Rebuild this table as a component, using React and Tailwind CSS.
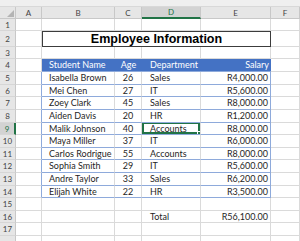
import React from 'react';

const cols = [
  { key: 'A', w: 'w-[26px]' },
  { key: 'B', w: 'w-[73px]' },
  { key: 'C', w: 'w-[27px]' },
  { key: 'D', w: 'w-[59px]' },
  { key: 'E', w: 'w-[70px]' },
  { key: 'F', w: 'w-[29px]' },
];

const employees = [
  ['Isabella Brown', '26', 'Sales', 'R4,000.00'],
  ['Mei Chen', '27', 'IT', 'R5,600.00'],
  ['Zoey Clark', '45', 'Sales', 'R8,000.00'],
  ['Aiden Davis', '20', 'HR', 'R1,200.00'],
  ['Malik Johnson', '40', 'Accounts', 'R8,000.00'],
  ['Maya Miller', '37', 'IT', 'R6,000.00'],
  ['Carlos Rodrigue', '55', 'Accounts', 'R8,000.00'],
  ['Sophia Smith', '29', 'IT', 'R5,600.00'],
  ['Andre Taylor', '33', 'Sales', 'R6,200.00'],
  ['Elijah White', '22', 'HR', 'R3,500.00'],
];

// heights for rows 5..14
const dataHeights = ['h-[13px]', 'h-[12px]', 'h-[13px]', 'h-[13px]', 'h-[12px]', 'h-[13px]', 'h-[12px]', 'h-[13px]', 'h-[13px]', 'h-[12px]'];

function RowHead({ n, active }) {
  return (
    <div
      className={`w-[16px] shrink-0 flex items-center justify-center text-[8px] border-b border-[#d6d6d6] ${
        active
          ? 'bg-[#d3d3d3] text-[#217346] border-r-2 border-r-[#217346]'
          : 'bg-[#e6e6e6] text-[#444] border-r border-r-[#c8c8c8]'
      }`}
    >
      {n}
    </div>
  );
}

function Cell({ w, className = '', children }) {
  return (
    <div className={`${w} shrink-0 flex items-center border-r border-b border-[#dadada] whitespace-nowrap overflow-hidden ${className}`}>
      {children}
    </div>
  );
}

function BlankRow({ n, h }) {
  return (
    <div className={`flex ${h}`}>
      <RowHead n={n} />
      {cols.map((c) => (
        <Cell key={c.key} w={c.w} />
      ))}
    </div>
  );
}

export default function App() {
  return (
    <div className="w-[300px] h-[241px] overflow-hidden bg-white text-[#1f1f1f] text-[9px] font-['Lato','Liberation_Sans',sans-serif]">
      <div className="h-[7px] bg-[#efefef] border-b border-[#d8d8d8]" />

      {/* column headers */}
      <div className="flex h-[12px] bg-[#e6e6e6] text-[8px] text-[#444]">
        <div className="w-[16px] shrink-0 relative border-r border-b border-[#c8c8c8]">
          <div className="absolute right-[1px] bottom-[1px] w-0 h-0 border-l-[7px] border-l-transparent border-b-[7px] border-b-[#b4b4b4]" />
        </div>
        {cols.map((c) => (
          <div
            key={c.key}
            className={`${c.w} shrink-0 flex items-center justify-center border-r border-[#c8c8c8] ${
              c.key === 'D' ? 'bg-[#d3d3d3] text-[#217346] border-b-2 border-b-[#217346]' : 'border-b'
            }`}
          >
            {c.key}
          </div>
        ))}
      </div>

      <BlankRow n={1} h="h-[12px]" />

      {/* title row */}
      <div className="flex h-[16px]">
        <RowHead n={2} />
        <Cell w="w-[26px]" />
        <div className="w-[229px] shrink-0 flex items-center justify-center border border-[#3c3c3c] text-[12.5px] font-bold text-black font-['Liberation_Sans',sans-serif]">
          Employee Information
        </div>
        <Cell w="w-[29px]" />
      </div>

      <BlankRow n={3} h="h-[12px]" />

      {/* table header */}
      <div className="flex h-[13px]">
        <RowHead n={4} />
        <Cell w="w-[26px]" />
        <div className="w-[229px] shrink-0 flex bg-[#4472c4] text-white border-b border-[#8eaadb]">
          <div className="w-[73px] pl-[7px] flex items-center">Student Name</div>
          <div className="w-[27px] flex items-center justify-center">Age</div>
          <div className="w-[59px] pl-[8px] flex items-center">Department</div>
          <div className="w-[70px] pr-[2px] flex items-center justify-end">Salary</div>
        </div>
        <Cell w="w-[29px]" />
      </div>

      {employees.map((e, i) => {
        const n = i + 5;
        const sel = n === 9;
        return (
          <div key={n} className={`flex ${dataHeights[i]}`}>
            <RowHead n={n} active={sel} />
            <Cell w="w-[26px]" className="border-r-[#8eaadb]" />
            <Cell w="w-[73px]" className="pl-[7px] border-b-[#8eaadb]">{e[0]}</Cell>
            <Cell w="w-[27px]" className="justify-center border-b-[#8eaadb]">{e[1]}</Cell>
            <Cell w="w-[59px]" className="pl-[8px] border-b-[#8eaadb] relative">
              {e[2]}
              {sel && (
                <div className="absolute inset-0 -top-[1px] border-2 border-[#217346]">
                  <div className="absolute -right-[3px] -bottom-[3px] w-[4px] h-[4px] bg-[#217346] border border-white" />
                </div>
              )}
            </Cell>
            <Cell w="w-[70px]" className="justify-end pr-[2px] border-b-[#8eaadb] border-r-[#8eaadb]">{e[3]}</Cell>
            <Cell w="w-[29px]" />
          </div>
        );
      })}

      <BlankRow n={15} h="h-[13px]" />

      <div className="flex h-[12px]">
        <RowHead n={16} />
        <Cell w="w-[26px]" />
        <Cell w="w-[73px]" />
        <Cell w="w-[27px]" />
        <Cell w="w-[59px]" className="pl-[8px]">Total</Cell>
        <Cell w="w-[70px]" className="justify-end pr-[2px]">R56,100.00</Cell>
        <Cell w="w-[29px]" />
      </div>

      <BlankRow n={17} h="h-[13px]" />
      <BlankRow n="" h="h-[13px]" />
    </div>
  );
}
